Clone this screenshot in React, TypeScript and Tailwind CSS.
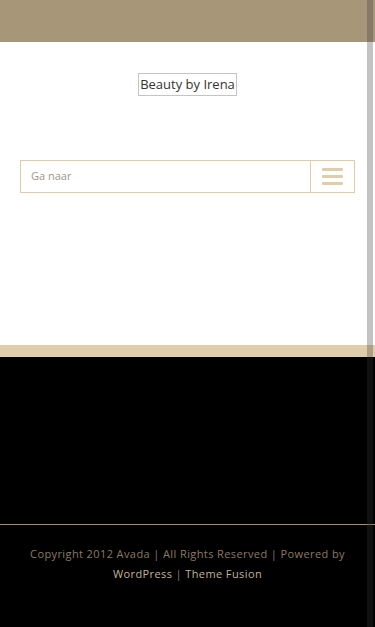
import React from "react";

export default function App() {
  return (
    <div className="relative min-h-[627px] w-[375px] bg-black font-['Open_Sans',sans-serif]">
      <div className="h-[42px] bg-[#a89679]" />
      <div className="flex h-[303px] flex-col bg-white px-[20px]">
        <div className="mt-[31px] flex justify-center">
          <div className="border border-[#c4c4c4] px-[1px] py-[2px] text-[13px] leading-[17px] text-[#333]">
            Beauty by Irena
          </div>
        </div>
        <div className="mt-[64px] flex h-[33px] border border-[#e0cca4]">
          <div className="flex flex-1 items-center pl-[10px] text-[11px] text-[#a0968a]">Ga naar</div>
          <div className="flex w-[44px] flex-col items-center justify-center gap-[4px] border-l border-[#e0cca4]">
            <div className="h-[3px] w-[21px] rounded-[1px] bg-[#e0cea9]" />
            <div className="h-[3px] w-[21px] rounded-[1px] bg-[#e0cea9]" />
            <div className="h-[3px] w-[21px] rounded-[1px] bg-[#e0cea9]" />
          </div>
        </div>
      </div>
      <div className="h-[12px] bg-[#dfcdab]" />
      <div className="h-[167px] bg-black" />
      <div className="h-px bg-[#a8916f]" />
      <div className="pt-[19px] text-center text-[11px] leading-[20px] tracking-[0.4px] text-[#8c7b62]">
        <div>Copyright 2012 Avada | All Rights Reserved | Powered by</div>
        <div>
          <span className="text-[#c3b497]">WordPress</span> | <span className="text-[#c3b497]">Theme Fusion</span>
        </div>
      </div>
      <div className="absolute right-[2px] top-0 h-[627px] w-[6px] bg-[rgba(55,55,55,0.3)]" />
    </div>
  );
}
